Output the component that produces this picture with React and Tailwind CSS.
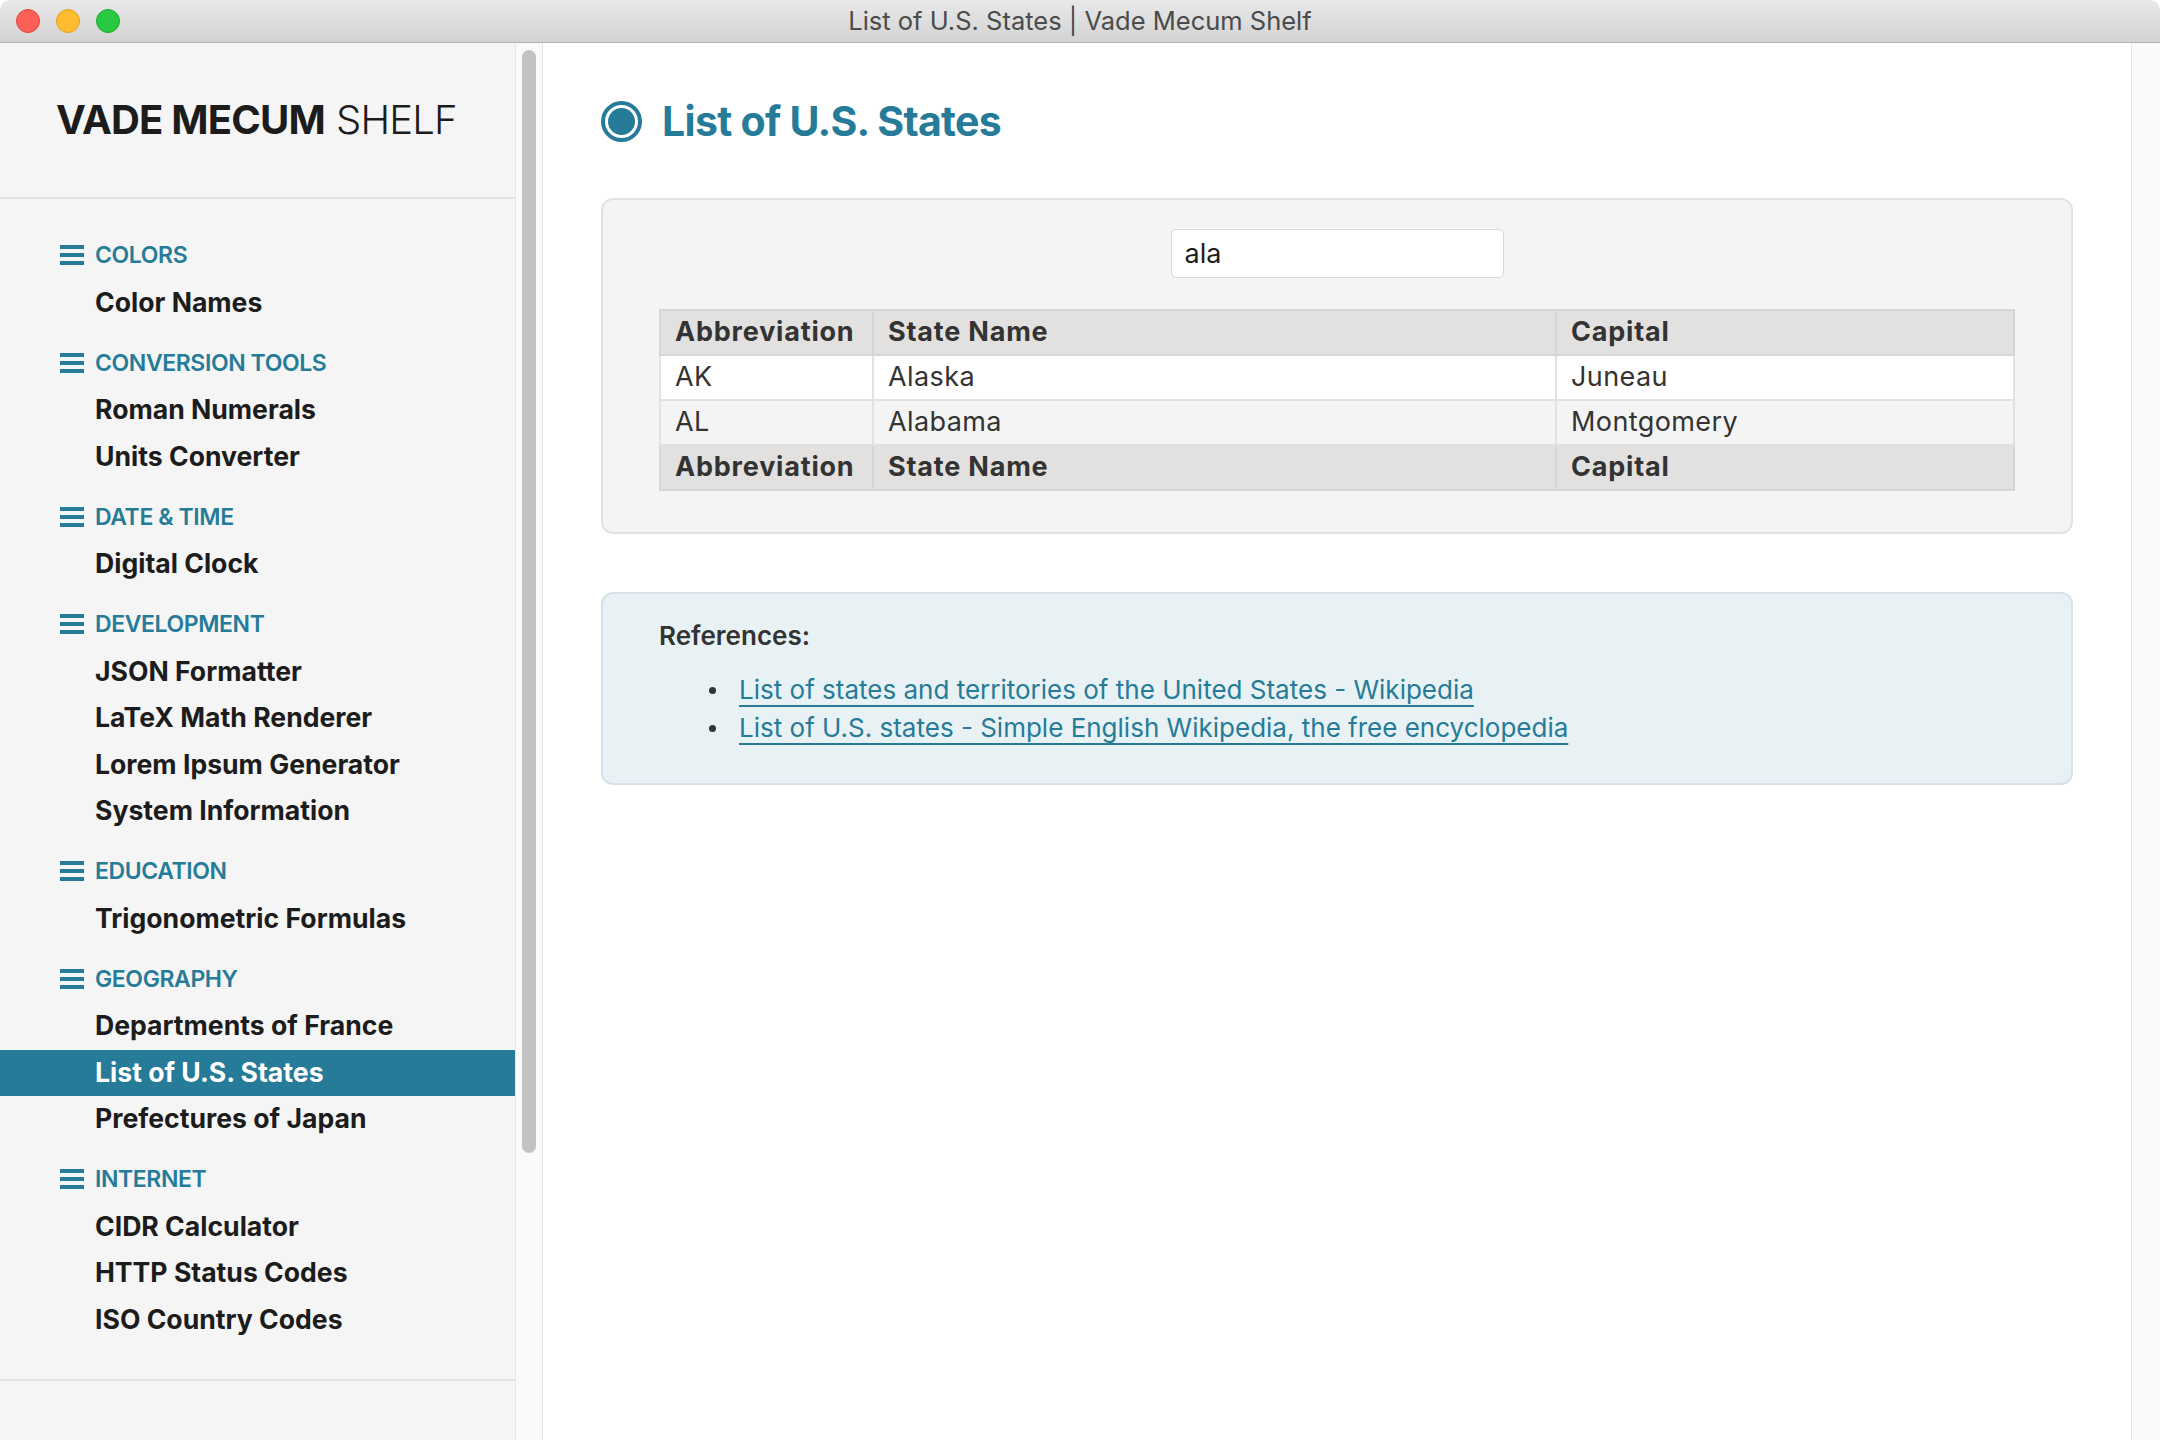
import React from 'react';

const sections = [
  { title: 'Colors', items: ['Color Names'] },
  { title: 'Conversion Tools', items: ['Roman Numerals', 'Units Converter'] },
  { title: 'Date & Time', items: ['Digital Clock'] },
  {
    title: 'Development',
    items: ['JSON Formatter', 'LaTeX Math Renderer', 'Lorem Ipsum Generator', 'System Information'],
  },
  { title: 'Education', items: ['Trigonometric Formulas'] },
  {
    title: 'Geography',
    items: ['Departments of France', 'List of U.S. States', 'Prefectures of Japan'],
  },
  { title: 'Internet', items: ['CIDR Calculator', 'HTTP Status Codes', 'ISO Country Codes'] },
];

const states = [
  ['AK', 'Alaska', 'Juneau'],
  ['AL', 'Alabama', 'Montgomery'],
];

function MenuIcon() {
  return (
    <svg width="24" height="20" viewBox="0 0 24 20" className="shrink-0">
      <rect x="0" y="0" width="24" height="4" fill="#267b98" />
      <rect x="0" y="8" width="24" height="4" fill="#267b98" />
      <rect x="0" y="16" width="24" height="4" fill="#267b98" />
    </svg>
  );
}

function TitleBar() {
  return (
    <div className="grid grid-cols-[1fr_auto_1fr] items-center h-[43px] shrink-0 rounded-t-[10px] border-b border-[#b3b3b3] bg-gradient-to-b from-[#e9e9e9] to-[#d3d3d3]">
      <div className="flex items-center gap-[16px] pl-[16px]">
        <span className="w-[24px] h-[24px] rounded-full bg-[#fe5f57] border border-[#e2463f]" />
        <span className="w-[24px] h-[24px] rounded-full bg-[#febc2e] border border-[#e0a123]" />
        <span className="w-[24px] h-[24px] rounded-full bg-[#28c840] border border-[#1eac2d]" />
      </div>
      <div className="text-[25.5px] text-[#4b4b4b]">List of U.S. States | Vade Mecum Shelf</div>
      <div />
    </div>
  );
}

function Sidebar() {
  return (
    <aside className="w-[515px] shrink-0 bg-[#f5f5f5] flex flex-col">
      <div className="h-[156px] shrink-0 flex items-center pl-[56px] border-b-2 border-[#e3e3e3] text-[40px] text-[#1c1c1c] tracking-[-0.8px]">
        <span className="font-bold">VADE MECUM</span>
        <span className="font-light ml-[11px]">SHELF</span>
      </div>
      <nav className="pt-[32px] pb-[36px] border-b-2 border-[#e3e3e3]">
        {sections.map((section, i) => (
          <div key={section.title} className={i > 0 ? 'mt-[12.5px]' : ''}>
            <div className="h-[48.5px] flex items-center gap-[11px] pl-[60px] text-[23px] font-semibold uppercase text-[#267b98] tracking-[-0.4px]">
              <MenuIcon />
              <span>{section.title}</span>
            </div>
            {section.items.map((item) => {
              const active = item === 'List of U.S. States';
              return (
                <a
                  key={item}
                  href="#"
                  className={`h-[46.5px] flex items-center pl-[95px] text-[26.6px] font-bold ${
                    active ? 'bg-[#267b98] text-white' : 'text-[#1c1c1c]'
                  }`}
                >
                  {item}
                </a>
              );
            })}
          </div>
        ))}
      </nav>
      <div className="flex-1" />
    </aside>
  );
}

function HeaderRow() {
  return (
    <tr className="bg-[#e2e1e0] font-bold text-left tracking-[0.8px]">
      <th className="h-[45px] px-[14px] border-2 border-[#d6d6d6]">Abbreviation</th>
      <th className="h-[45px] px-[14px] border-2 border-[#d6d6d6]">State Name</th>
      <th className="h-[45px] px-[14px] border-2 border-[#d6d6d6]">Capital</th>
    </tr>
  );
}

function Content() {
  return (
    <main className="flex-1 bg-white px-[58px] pt-[58px]">
      <div className="flex items-center gap-[20px] h-[41px]">
        <svg width="41" height="41" viewBox="0 0 41 41" className="shrink-0">
          <circle cx="20.5" cy="20.5" r="18.5" fill="none" stroke="#267b98" strokeWidth="4" />
          <circle cx="20.5" cy="20.5" r="13.5" fill="#267b98" />
        </svg>
        <h1 className="text-[41px] font-bold text-[#267b98] tracking-[-0.7px]">List of U.S. States</h1>
      </div>

      <section className="mt-[56px] rounded-[12px] border-2 border-[#e2e2e2] bg-[#f4f4f4] px-[56px] pt-[29px] pb-[41px]">
        <div className="flex justify-center">
          <input
            defaultValue="ala"
            className="w-[333px] h-[49px] bg-white border border-[#d9d9d9] rounded-[5px] px-[13px] text-[27px] text-[#1c1c1c] outline-none"
          />
        </div>
        <table className="mt-[31px] w-full border-collapse text-[27px] tracking-[0.4px] text-[#333]">
          <colgroup>
            <col className="w-[213px]" />
            <col className="w-[683px]" />
            <col />
          </colgroup>
          <thead>
            <HeaderRow />
          </thead>
          <tbody>
            {states.map((s, i) => (
              <tr key={s[0]} className={i % 2 === 0 ? 'bg-white' : 'bg-[#f4f4f4]'}>
                {s.map((c) => (
                  <td key={c} className="h-[45px] px-[14px] border-2 border-[#e2e2e2]">
                    {c}
                  </td>
                ))}
              </tr>
            ))}
          </tbody>
          <tfoot>
            <HeaderRow />
          </tfoot>
        </table>
      </section>

      <section className="mt-[58px] rounded-[12px] border-2 border-[#d6e2e7] bg-[#e8f1f4] px-[56px] pt-[24px] pb-[36px]">
        <div className="text-[26px] leading-[36px] font-semibold text-[#333]">References:</div>
        <ul className="mt-[17px] text-[26px] leading-[38px]">
          {[
            'List of states and territories of the United States - Wikipedia',
            'List of U.S. states - Simple English Wikipedia, the free encyclopedia',
          ].map((ref) => (
            <li key={ref} className="flex items-center pl-[50px]">
              <span className="w-[7px] h-[7px] rounded-full bg-[#333] shrink-0" />
              <a
                href="#"
                className="ml-[23px] text-[#267b98] underline decoration-2 underline-offset-[6px]"
              >
                {ref}
              </a>
            </li>
          ))}
        </ul>
      </section>
    </main>
  );
}

export default function App() {
  return (
    <div className="w-[2160px] h-[1440px] flex flex-col bg-white font-['Inter',sans-serif] overflow-hidden">
      <TitleBar />
      <div className="flex flex-1 min-h-0">
        <Sidebar />
        <div className="w-[28px] shrink-0 bg-[#fafafa] border-x border-[#e6e6e6] px-[6px] pt-[7px]">
          <div className="h-[1103px] rounded-full bg-[#c2c2c2]" />
        </div>
        <Content />
        <div className="w-[29px] shrink-0 bg-[#fafafa] border-l border-[#e6e6e6]" />
      </div>
    </div>
  );
}
